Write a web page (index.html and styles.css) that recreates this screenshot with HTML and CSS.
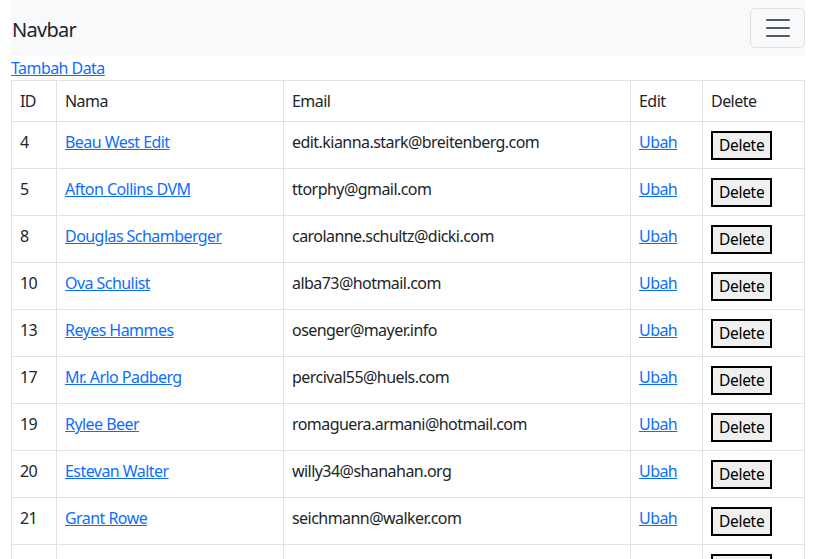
FILE: index.html
```html
<!DOCTYPE html>
<html>
<head>
<meta charset="utf-8">
<link rel="stylesheet" href="styles.css">
</head>
<body>
<div class="page">
  <nav class="navbar">
    <span class="brand">Navbar</span>
    <button class="toggler" type="button">
      <svg width="30" height="30" viewBox="0 0 30 30"><path d="M4 7h22M4 15h22M4 23h22" stroke="rgba(33,37,41,0.75)" stroke-width="2" stroke-linecap="round"/></svg>
    </button>
  </nav>
  <a class="link" href="#">Tambah Data</a>
  <table class="tbl">
    <colgroup><col class="c1"><col class="c2"><col class="c3"><col class="c4"><col class="c5"></colgroup>
    <thead><tr><th>ID</th><th>Nama</th><th>Email</th><th>Edit</th><th>Delete</th></tr></thead>
    <tbody>
      <tr><td>4</td><td><a class="link" href="#">Beau West Edit</a></td><td>edit.kianna.stark@breitenberg.com</td><td><a class="link" href="#">Ubah</a></td><td><button class="del">Delete</button></td></tr>
      <tr><td>5</td><td><a class="link" href="#">Afton Collins DVM</a></td><td>ttorphy@gmail.com</td><td><a class="link" href="#">Ubah</a></td><td><button class="del">Delete</button></td></tr>
      <tr><td>8</td><td><a class="link" href="#">Douglas Schamberger</a></td><td>carolanne.schultz@dicki.com</td><td><a class="link" href="#">Ubah</a></td><td><button class="del">Delete</button></td></tr>
      <tr><td>10</td><td><a class="link" href="#">Ova Schulist</a></td><td>alba73@hotmail.com</td><td><a class="link" href="#">Ubah</a></td><td><button class="del">Delete</button></td></tr>
      <tr><td>13</td><td><a class="link" href="#">Reyes Hammes</a></td><td>osenger@mayer.info</td><td><a class="link" href="#">Ubah</a></td><td><button class="del">Delete</button></td></tr>
      <tr><td>17</td><td><a class="link" href="#">Mr. Arlo Padberg</a></td><td>percival55@huels.com</td><td><a class="link" href="#">Ubah</a></td><td><button class="del">Delete</button></td></tr>
      <tr><td>19</td><td><a class="link" href="#">Rylee Beer</a></td><td>romaguera.armani@hotmail.com</td><td><a class="link" href="#">Ubah</a></td><td><button class="del">Delete</button></td></tr>
      <tr><td>20</td><td><a class="link" href="#">Estevan Walter</a></td><td>willy34@shanahan.org</td><td><a class="link" href="#">Ubah</a></td><td><button class="del">Delete</button></td></tr>
      <tr><td>21</td><td><a class="link" href="#">Grant Rowe</a></td><td>seichmann@walker.com</td><td><a class="link" href="#">Ubah</a></td><td><button class="del">Delete</button></td></tr>
      <tr><td></td><td></td><td></td><td></td><td><button class="del">Delete</button></td></tr>
    </tbody>
  </table>
</div>
</body>
</html>
```
FILE: styles.css
```css
html, body { margin: 0; padding: 0; background: #fff; }
body {
  font-family: "Noto Sans", "Open Sans", sans-serif;
  font-size: 16px;
  line-height: 24px;
  letter-spacing: -0.55px;
  color: #212529;
}
.page { padding: 0 11px; }
.navbar {
  background: #f8f9fa;
  height: 56px;
  display: flex;
  align-items: center;
  justify-content: space-between;
}
.brand { font-size: 20px; line-height: 30px; padding-left: 1px; margin-top: 3px; letter-spacing: -0.7px; }
.toggler {
  width: 55px; height: 40px;
  margin-top: -1px;
  border: 1px solid rgba(0,0,0,0.1);
  border-radius: 5px;
  background: transparent;
  padding: 0;
  display: flex; align-items: center; justify-content: center;
}
.toggler svg { display: block; }
.link { color: #0d6efd; text-decoration: underline; }
.tbl {
  width: 100%;
  border-collapse: collapse;
  table-layout: fixed;
}
.c1 { width: 45px; } .c2 { width: 227px; } .c3 { width: 347px; } .c4 { width: 72px; }
.tbl th, .tbl td {
  border: 1px solid #dee2e6;
  padding: 8px 8px;
  height: 24px;
  text-align: left;
  font-weight: 400;
  vertical-align: top;
  white-space: nowrap;
  overflow: hidden;
}
.del {
  font-family: inherit;
  font-size: 15.5px;
  line-height: 23px;
  letter-spacing: -0.3px;
  color: #000;
  background: #efefef;
  border: 2px solid #000;
  padding: 1px 6px;
  margin: 0;
  margin-top: 1px;
  vertical-align: top;
}
```
